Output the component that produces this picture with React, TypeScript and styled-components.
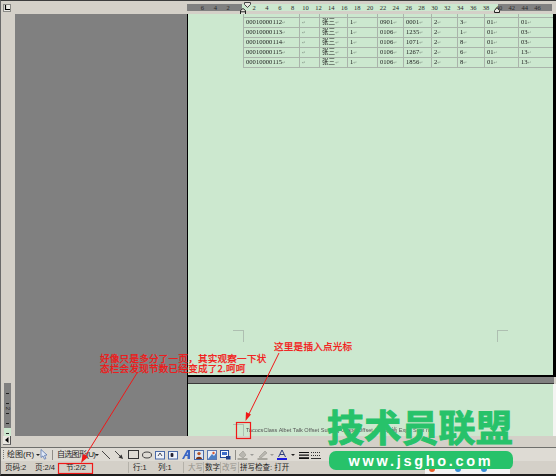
import styled, { createGlobalStyle } from 'styled-components';

const GlobalStyle = createGlobalStyle`
  html, body {
    margin: 0;
    padding: 0;
    overflow: hidden;
    background: #d4d0c8;
  }
`;

const CJK = `"Liberation Sans", "Noto Sans CJK SC", sans-serif`;

const Window = styled.div`
  position: relative;
  width: 556px;
  height: 476px;
  box-sizing: border-box;
  display: flex;
  flex-direction: column;
  overflow: hidden;
  background: #d4d0c8;
  border-top: 1px solid #3c3c3c;
  border-bottom: 2px solid #1c1c1c;
  border-left: 1px solid #6a6a6a;
  font-family: ${CJK};
`;

const RulerBar = styled.div`
  position: relative;
  height: 13px;
  flex: none;
  display: flex;
  align-items: flex-start;
  padding-top: 3px;
  box-sizing: border-box;
`;

const CornerBox = styled.div`
  width: 8px;
  height: 8px;
  margin-left: 2px;
  margin-right: 176px;
  background: #ecebe6;
  border: 1px solid #8a8a86;
  box-sizing: border-box;
  display: flex;
  align-items: center;
  justify-content: center;

  svg {
    display: block;
  }
`;

const RulerTrack = styled.div`
  width: 365px;
  height: 7px;
  padding-left: 9px;
  box-sizing: border-box;
  display: flex;
  align-items: center;
  background: linear-gradient(
    to right,
    #808080 55px,
    #cce8cf 55px 311px,
    #808080 311px
  );
`;

const RulerTick = styled.span`
  width: 12.9px;
  flex: none;
  text-align: center;
  font-family: "Liberation Serif", serif;
  font-size: 6.5px;
  line-height: 7px;
  color: #2b2b2b;
`;

const RulerMarker = styled.svg<{ $x: number; $y: number }>`
  position: absolute;
  left: ${({ $x }) => $x}px;
  top: ${({ $y }) => $y}px;
`;

const Main = styled.div`
  flex: 1;
  min-height: 0;
  display: flex;
`;

const LeftColumn = styled.div`
  width: 14px;
  flex: none;
  padding-left: 3px;
  box-sizing: border-box;
  display: flex;
  flex-direction: column;
  justify-content: flex-end;
`;

const VerticalRuler = styled.div`
  width: 7px;
  height: 53px;
  padding-top: 10px;
  box-sizing: border-box;
  display: flex;
  flex-direction: column;
  align-items: center;
  background: linear-gradient(to bottom, #808080 45px, #cce8cf 45px);
`;

const RulerDash = styled.i<{ $gap: number }>`
  display: block;
  width: 3px;
  height: 1px;
  flex: none;
  margin-top: ${({ $gap }) => $gap}px;
  background: #222;
`;

const VerticalNumber = styled.span`
  font-size: 6px;
  line-height: 5px;
  height: 5px;
  margin-top: 2px;
  color: #222;
  transform: rotate(90deg);
`;

const Workspace = styled.div`
  width: 173px;
  flex: none;
  box-sizing: border-box;
  background: #808080;
  border-right: 1px solid #000;
`;

const PageColumn = styled.div`
  flex: 1;
  min-width: 0;
  display: flex;
  flex-direction: column;
`;

const PageOne = styled.div`
  position: relative;
  flex: 1;
  min-height: 0;
  overflow: hidden;
  box-sizing: border-box;
  padding-left: 55px;
  background: #cce8cf;
  border-right: 3px solid #000;
  border-bottom: 2px solid #000;
`;

const PageGap = styled.div`
  height: 7px;
  flex: none;
  box-sizing: border-box;
  margin-right: 2px;
  background: #808080;
  border-bottom: 1px solid #3a3a3a;
`;

const PageTwo = styled.div`
  position: relative;
  height: 52px;
  flex: none;
  overflow: hidden;
  box-sizing: border-box;
  padding: 0 0 2px 58px;
  display: flex;
  align-items: flex-end;
  background: #cce8cf;
  border-right: 3px solid #f4f4f2;
`;

const CropMark = styled.i<{ $x: number; $y: number; $side: 'left' | 'right' }>`
  position: absolute;
  left: ${({ $x }) => $x}px;
  top: ${({ $y }) => $y}px;
  width: 10px;
  height: 11px;
  border-top: 1px solid #aebfb1;
  border-${({ $side }) => $side}: 1px solid #aebfb1;
`;

const DataTable = styled.table`
  width: 311px;
  border-collapse: collapse;
  table-layout: fixed;
  filter: blur(0.25px);

  td {
    height: 9.8px;
    box-sizing: border-box;
    padding: 0 0 0 2px;
    border: 1px solid #aab4ab;
    font-family: "Liberation Serif", "Noto Sans CJK SC", serif;
    font-size: 6.6px;
    line-height: 8px;
    color: #1d1d1d;
    white-space: nowrap;
    overflow: hidden;
  }

  tr:first-child td {
    height: 3px;
    border-top: 0;
    line-height: 0;
  }
`;

const ParaMark = styled.span`
  color: #7b8a7e;
  font-family: "DejaVu Sans", sans-serif;
  font-size: 4.5px;
`;

const FieldText = styled.div`
  font-size: 5.6px;
  line-height: 7px;
  color: #555;
  white-space: nowrap;
  filter: blur(0.25px);
`;

const ScrollRow = styled.div`
  height: 10px;
  flex: none;
  padding-left: 2px;
  display: flex;
`;

const ScrollButton = styled.div`
  width: 8px;
  height: 9px;
  box-sizing: border-box;
  display: flex;
  align-items: center;
  justify-content: center;
  background: #e9e7e1;
  border-right: 1px solid #555;
  border-bottom: 1px solid #777;
`;

const Toolbar = styled.div`
  height: 14px;
  flex: none;
  margin-top: 1px;
  box-sizing: border-box;
  border-top: 1px solid #6f6f6c;
  background: #dedbd4;
  display: flex;
  align-items: center;
`;

const Gripper = styled.i`
  width: 1px;
  height: 9px;
  margin-left: 2px;
  border-left: 1px dotted #777;
`;

const ToolText = styled.span<{ $left: number; $width: number; $tight?: boolean }>`
  width: ${({ $width }) => $width}px;
  margin-left: ${({ $left }) => $left}px;
  flex: none;
  font-size: 8px;
  line-height: 11px;
  letter-spacing: ${({ $tight }) => ($tight ? '-0.7px' : '0')};
  color: #1e1e1e;
  white-space: nowrap;
`;

const Caret = styled.i<{ $left: number; $light?: boolean }>`
  width: 0;
  height: 0;
  flex: none;
  margin-left: ${({ $left }) => $left}px;
  border-left: 2px solid transparent;
  border-right: 2px solid transparent;
  border-top: 2px solid ${({ $light }) => ($light ? '#9a9a96' : '#222')};
`;

const ToolSeparator = styled.i<{ $left: number }>`
  width: 1px;
  height: 10px;
  flex: none;
  margin-left: ${({ $left }) => $left}px;
  background: #8f8d87;
`;

const ToolIcon = styled.svg<{ $left: number }>`
  flex: none;
  display: block;
  margin-left: ${({ $left }) => $left}px;
`;

const StatusBar = styled.div`
  height: 13px;
  flex: none;
  display: flex;
  align-items: center;
  background: #d4d0c8;
`;

const StatusCell = styled.span<{ $width: number; $pad?: number; $muted?: boolean; $edge?: boolean }>`
  width: ${({ $width }) => $width}px;
  height: 11px;
  flex: none;
  box-sizing: border-box;
  padding-left: ${({ $pad }) => $pad ?? 4}px;
  font-size: 7.5px;
  line-height: 11px;
  white-space: nowrap;
  color: ${({ $muted }) => ($muted ? '#918f89' : '#1e1e1e')};
  border-left: ${({ $edge }) => ($edge ? '1px solid #b4b1a9' : '0')};
`;

const Annotations = styled.svg`
  position: absolute;
  left: -1px;
  top: -1px;
  pointer-events: none;
`;

const Note = styled.div<{ $x: number; $y: number; $spacing: number }>`
  position: absolute;
  left: ${({ $x }) => $x}px;
  top: ${({ $y }) => $y}px;
  font-family: "Noto Sans CJK SC", sans-serif;
  font-size: 9.6px;
  font-weight: 400;
  line-height: 10px;
  letter-spacing: ${({ $spacing }) => $spacing}px;
  color: #f31414;
  -webkit-text-stroke: 0.25px #f31414;
  white-space: nowrap;
`;

const WatermarkTitle = styled.div`
  position: absolute;
  left: 326px;
  top: 403px;
  font-family: "Noto Sans CJK SC", sans-serif;
  font-size: 37px;
  font-weight: 700;
  line-height: 44px;
  letter-spacing: 0.2px;
  color: #27c26a;
  -webkit-text-stroke: 1px #27c26a;
  white-space: nowrap;
`;

const WatermarkPill = styled.div`
  position: absolute;
  left: 328px;
  top: 450px;
  width: 184px;
  height: 19px;
  border-radius: 7px;
  background: #27c26a;
  color: #fff;
  display: flex;
  align-items: center;
  justify-content: center;
  font-family: "Liberation Sans", sans-serif;
  font-size: 14.5px;
  font-weight: 700;
  letter-spacing: 2.7px;
`;

const CornerPeek = styled.div`
  position: absolute;
  left: 424px;
  top: 468px;
  width: 85px;
  height: 6px;
  background: #f3f4f4;
  display: flex;
  gap: 20px;
  padding-left: 4px;
  box-sizing: border-box;
`;

const PeekMark = styled.i<{ $color: string }>`
  width: 6px;
  height: 3px;
  border-radius: 0 0 3px 3px;
  background: ${({ $color }) => $color};
`;

const rows = [
  ['00010000112', '', '张三', '1', '0901', '0001', '2', '3', '01', '01'],
  ['00010000113', '', '张三', '1', '0106', '1235', '2', '1', '01', '03'],
  ['00010000114', '', '张三', '1', '0106', '1071', '2', '8', '01', '03'],
  ['00010000115', '', '张三', '1', '0106', '1267', '2', '6', '01', '13'],
  ['00010000115', '', '张三', '1', '0106', '1856', '2', '8', '01', '13'],
];

const columns = [56, 20, 28, 30, 26, 28, 26, 27, 34, 36];

const ticks = [
  6, 4, 2, '', 2, 4, 6, 8, 10, 12, 14, 16, 18, 20, 22, 24, 26, 28, 30, 32, 34, 36, 38, 40, 42, 44,
  46,
];

function Line() {
  return (
    <ToolIcon $left={2} width="10" height="10" viewBox="0 0 10 10">
      <path d="M1 1 9 9" stroke="#333" strokeWidth="0.9" />
    </ToolIcon>
  );
}

function LineArrow() {
  return (
    <ToolIcon $left={3} width="10" height="10" viewBox="0 0 10 10">
      <path d="M1 1 7 7" stroke="#333" strokeWidth="0.9" />
      <path d="M9 9 4.5 7.5 7.5 4.5Z" fill="#333" />
    </ToolIcon>
  );
}

function Rect() {
  return (
    <ToolIcon $left={4} width="11" height="9" viewBox="0 0 11 9">
      <rect x="0.5" y="0.5" width="10" height="8" fill="none" stroke="#333" />
    </ToolIcon>
  );
}

function Ellipse() {
  return (
    <ToolIcon $left={3} width="10" height="8" viewBox="0 0 10 8">
      <ellipse cx="5" cy="4" rx="4.5" ry="3" fill="none" stroke="#444" />
    </ToolIcon>
  );
}

function TextFrame({ left, vertical }: { left: number; vertical?: boolean }) {
  return (
    <ToolIcon $left={left} width="10" height="10" viewBox="0 0 10 10">
      <rect x="0.5" y="1.5" width="9" height="7.5" fill="#eef2f8" stroke="#4a6aa8" />
      <path
        d={vertical ? 'M3 3.5h2v3H3z' : 'M3 6 5 3l2 3'}
        fill={vertical ? '#223' : 'none'}
        stroke="#223"
        strokeWidth="0.8"
      />
    </ToolIcon>
  );
}

function WordArt() {
  return (
    <ToolIcon $left={3} width="10" height="11" viewBox="0 0 10 11">
      <path d="M1 10 6 1h3v9H6.5V7H4.5L3 10Z" fill="#3a66c4" />
      <path d="M5.5 5.5 6.8 3v2.5Z" fill="#dfe6f4" />
    </ToolIcon>
  );
}

function OrgChart() {
  return (
    <ToolIcon $left={3} width="10" height="10" viewBox="0 0 10 10">
      <rect x="0.5" y="0.5" width="9" height="9" fill="#dfe7f2" stroke="#4a6aa8" />
      <circle cx="5" cy="3.6" r="1.7" fill="#b2562d" />
      <path d="M2 9c0-3 6-3 6 0Z" fill="#7b3316" />
    </ToolIcon>
  );
}

function ClipArt() {
  return (
    <ToolIcon $left={3} width="10" height="10" viewBox="0 0 10 10">
      <rect x="0.5" y="0.5" width="9" height="9" fill="#e9eef6" stroke="#5a78b0" />
      <path d="M1 9 5 4l2 2 2-3v6Z" fill="#4d7fc4" />
      <circle cx="6.5" cy="3" r="1.2" fill="#d8552d" />
    </ToolIcon>
  );
}

function Picture() {
  return (
    <ToolIcon $left={3} width="11" height="10" viewBox="0 0 11 10">
      <rect x="0.5" y="0.5" width="8" height="7" fill="#f3f6fb" stroke="#244a9a" />
      <rect x="2" y="2" width="5" height="3" fill="#3e6cc9" />
      <rect x="6" y="6" width="4.5" height="3.5" fill="#1f3f8a" />
    </ToolIcon>
  );
}

function FillBucket() {
  return (
    <ToolIcon $left={1} width="11" height="10" viewBox="0 0 11 10">
      <path d="M2 5 6 1l3 4-3 3Z" fill="#b9b7b0" stroke="#99978f" strokeWidth="0.6" />
      <rect x="0.5" y="8" width="10" height="2" fill="#a9a79f" />
    </ToolIcon>
  );
}

function Pen() {
  return (
    <ToolIcon $left={3} width="11" height="10" viewBox="0 0 11 10">
      <path d="M2 7 8 1l2 2-6 5Z" fill="#b9b7b0" stroke="#99978f" strokeWidth="0.6" />
      <rect x="0.5" y="8" width="10" height="2" fill="#a9a79f" />
    </ToolIcon>
  );
}

function FontColor() {
  return (
    <ToolIcon $left={3} width="10" height="11" viewBox="0 0 10 11">
      <path d="M1.5 8 5 1l3.5 7M3 5.5h4" fill="none" stroke="#2f3f7a" strokeWidth="1" />
      <rect x="0" y="9" width="10" height="2" fill="#1a1ae0" />
    </ToolIcon>
  );
}

function LineStyle() {
  return (
    <ToolIcon $left={4} width="10" height="8" viewBox="0 0 10 8">
      <path d="M0 1h10v1H0zM0 3.5h10v1.2H0zM0 6.2h10v1.8H0z" fill="#111" />
    </ToolIcon>
  );
}

function DashStyle() {
  return (
    <ToolIcon $left={2} width="10" height="8" viewBox="0 0 10 8">
      <path d="M0 1.5h10M0 4.5h10" stroke="#333" strokeDasharray="1 1" />
      <path d="M0 7.5h10" stroke="#333" />
    </ToolIcon>
  );
}

function Cursor() {
  return (
    <ToolIcon $left={0} width="8" height="11" viewBox="0 0 8 11">
      <path d="M1 0.5v8l2-1.6 1.5 3.3 1.4-.7L4.5 6.4 7 6Z" fill="#dfe8f6" stroke="#4a6aa8" strokeWidth="0.7" />
    </ToolIcon>
  );
}

export default function App() {
  return (
    <Window>
      <GlobalStyle />

      <RulerBar>
        <CornerBox>
          <svg width="6" height="6" viewBox="0 0 6 6">
            <path d="M1.5 0v4.5H6" fill="none" stroke="#000" strokeWidth="1.2" />
          </svg>
        </CornerBox>
        <RulerTrack>
          {ticks.map((tick, i) => (
            <RulerTick key={i}>{tick}</RulerTick>
          ))}
        </RulerTrack>
        <RulerMarker $x={243} $y={1} width="7" height="6" viewBox="0 0 7 6">
          <path d="M0.5 0.5h6v2L3.5 5.5 0.5 2.5Z" fill="#e8e6e0" stroke="#444" />
        </RulerMarker>
        <RulerMarker $x={239} $y={7} width="6" height="7" viewBox="0 0 6 7">
          <path d="M0.5 6.5v-4L3 0.5l2.5 2v4Z" fill="#e8e6e0" stroke="#222" />
          <path d="M0.5 3.8h5" stroke="#222" />
        </RulerMarker>
        <RulerMarker $x={493} $y={6} width="6" height="6" viewBox="0 0 6 6">
          <path d="M0.5 5.5v-2L3 0.5l2.5 3v2Z" fill="#e8e6e0" stroke="#222" />
        </RulerMarker>
      </RulerBar>

      <Main>
        <LeftColumn>
          <VerticalRuler>
            <RulerDash $gap={0} />
            <RulerDash $gap={9} />
            <VerticalNumber>2</VerticalNumber>
            <RulerDash $gap={2} />
            <RulerDash $gap={9} />
            <RulerDash $gap={9} />
          </VerticalRuler>
        </LeftColumn>
        <Workspace />
        <PageColumn>
          <PageOne>
            <DataTable>
              <colgroup>
                {columns.map((width, i) => (
                  <col key={i} width={width} />
                ))}
              </colgroup>
              <tbody>
                <tr>
                  {columns.map((_, c) => (
                    <td key={c} />
                  ))}
                </tr>
                {rows.map((row, r) => (
                  <tr key={r}>
                    {row.map((cell, c) => (
                      <td key={c}>
                        {cell}
                        <ParaMark>↵</ParaMark>
                      </td>
                    ))}
                  </tr>
                ))}
              </tbody>
            </DataTable>
            <CropMark $x={45} $y={316} $side="right" />
            <CropMark $x={309} $y={316} $side="left" />
          </PageOne>
          <PageGap />
          <PageTwo>
            <CropMark $x={45} $y={40} $side="right" />
            <FieldText>TacocsClass Albet Talk Offset Sum 尚 Grape Offset Group 尚 Exp t Sum mu</FieldText>
          </PageTwo>
        </PageColumn>
      </Main>

      <ScrollRow>
        <ScrollButton>
          <svg width="4" height="6" viewBox="0 0 4 6">
            <path d="M3.5 0v6L0 3Z" fill="#000" />
          </svg>
        </ScrollButton>
      </ScrollRow>

      <Toolbar>
        <Gripper />
        <ToolText $left={2} $width={28}>绘图(R)</ToolText>
        <Caret $left={1} />
        <Cursor />
        <ToolSeparator $left={4} />
        <ToolText $left={4} $width={37} $tight>自选图形(U)</ToolText>
        <Caret $left={1} />
        <Line />
        <LineArrow />
        <Rect />
        <Ellipse />
        <TextFrame left={3} />
        <TextFrame left={3} vertical />
        <WordArt />
        <OrgChart />
        <ClipArt />
        <Picture />
        <ToolSeparator $left={4} />
        <FillBucket />
        <Caret $left={2} $light />
        <Pen />
        <Caret $left={2} $light />
        <FontColor />
        <Caret $left={4} />
        <LineStyle />
        <DashStyle />
      </Toolbar>

      <StatusBar>
        <StatusCell $width={30}>页码:2</StatusCell>
        <StatusCell $width={31}>页:2/4</StatusCell>
        <StatusCell $width={66}>节:2/2</StatusCell>
        <StatusCell $width={26} $edge>行:1</StatusCell>
        <StatusCell $width={29}>列:1</StatusCell>
        <StatusCell $width={20} $edge $muted>大写</StatusCell>
        <StatusCell $width={17} $pad={1} $edge>数字</StatusCell>
        <StatusCell $width={18} $pad={1} $edge $muted>改写</StatusCell>
        <StatusCell $width={80} $pad={1} $edge>拼写检查: 打开</StatusCell>
      </StatusBar>

      <Note $x={99} $y={352} $spacing={0.2}>好像只是多分了一页，其实观察一下状</Note>
      <Note $x={99} $y={362} $spacing={0.2}>态栏会发现节数已经变成了2.呵呵</Note>
      <Note $x={273} $y={340} $spacing={0.2}>这里是插入点光标</Note>

      <Annotations width="556" height="476" viewBox="0 0 556 476">
        <path d="M137 373 84 458" stroke="#f01818" strokeWidth="1" />
        <path d="M81 463 83 454 88 457Z" fill="#f01818" />
        <path d="M279 353 248 416" stroke="#f01818" strokeWidth="1" />
        <path d="M245.5 421 246 412 251 414.5Z" fill="#f01818" />
        <rect x="236.5" y="422.5" width="14" height="16" fill="none" stroke="#f01818" strokeWidth="1.2" />
        <rect x="58.5" y="463.5" width="34" height="10" fill="none" stroke="#f01818" strokeWidth="1.2" />
      </Annotations>

      <WatermarkTitle>技术员联盟</WatermarkTitle>
      <WatermarkPill>www.jsgho.com</WatermarkPill>
      <CornerPeek>
        <PeekMark $color="#e8602c" />
        <PeekMark $color="#3a8fd8" />
        <PeekMark $color="#3a8fd8" />
      </CornerPeek>
    </Window>
  );
}
